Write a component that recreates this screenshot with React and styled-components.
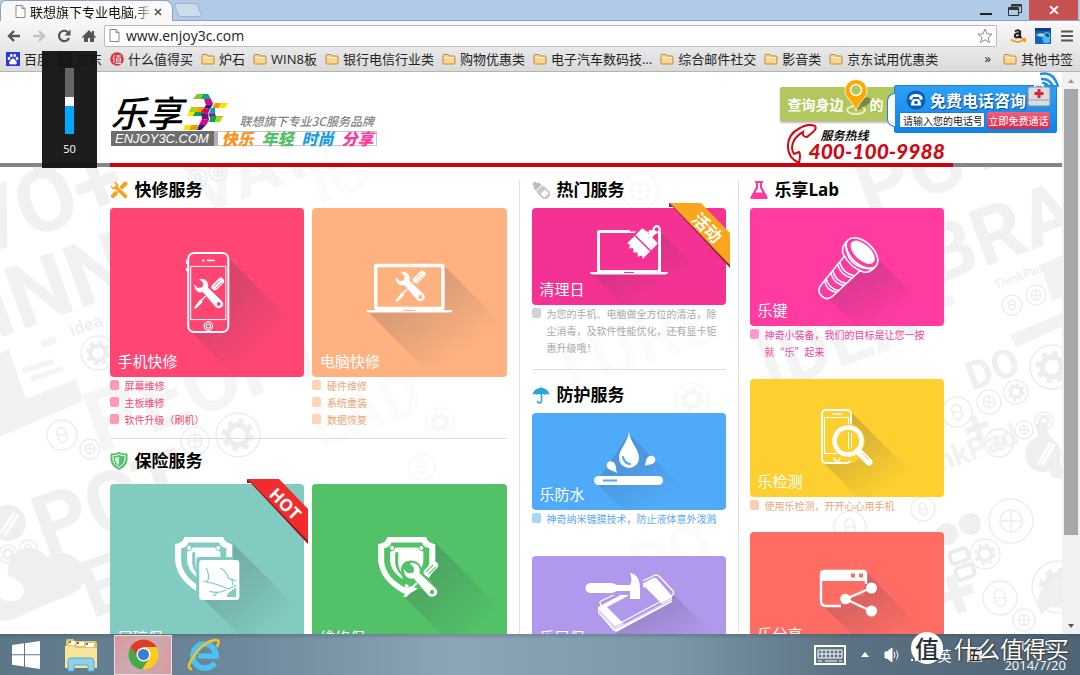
import React from "react";
import styled, { createGlobalStyle } from "styled-components";

const sans = `"Open Sans", "Noto Sans CJK SC", sans-serif`;
const cjk = `"Noto Sans CJK SC", sans-serif`;

const GlobalStyle = createGlobalStyle`
  * { box-sizing: border-box; }
  html, body { margin: 0; height: 100%; }
  body { font-family: ${sans}; background: #fff; color: #000; overflow: hidden; }
  button { font: inherit; padding: 0; border: 0; background: none; color: inherit; cursor: pointer; }
  a { color: inherit; text-decoration: none; }
  h1, h2, p, ul { margin: 0; padding: 0; }
  ul { list-style: none; }
  svg { display: block; flex: none; }
`;

const Desktop = styled.div`
  position: relative;
  height: 100vh;
  display: flex;
  flex-direction: column;
`;

/* ---------- browser chrome ---------- */

const TitleBar = styled.header`
  flex: none;
  height: 21px;
  display: flex;
  align-items: flex-end;
  background: #b0cae8;
  border-bottom: 1px solid #8ba4c2;
`;

const TabShape = styled.div`
  height: 21px;
  margin-bottom: -1px;
  padding: 1px 10px 0 14px;
  display: flex;
  align-items: center;
  gap: 4px;
  background: #f8f8f8;
  border: 1px solid #8ba4c2;
  border-bottom: 0;
  border-radius: 6px 8px 0 0;
  font-size: 13px;
  line-height: 20px;
  white-space: nowrap;
`;

const FadingText = styled.span`
  background: linear-gradient(90deg, #111 84%, #bbb 100%);
  background-clip: text;
  color: transparent;
`;

const NewTab = styled.button`
  width: 24px;
  height: 14px;
  margin: 0 0 3px 3px;
  && {
    background: #cddcec;
    border: 1px solid #9ab2cf;
  }
  border-radius: 3px;
  transform: skewX(20deg);
`;

const WindowButtons = styled.div`
  margin-left: auto;
  padding-right: 2px;
  align-self: flex-start;
  display: flex;
`;

const WindowButton = styled.button`
  width: ${(p) => (p.$close ? 49 : 29)}px;
  height: 20px;
  display: grid;
  place-items: center;
  && { background: ${(p) => (p.$close ? "#c75050" : "transparent")}; }
`;

const Toolbar = styled.div`
  flex: none;
  height: 28px;
  padding: 1px 6px 0 7px;
  display: flex;
  align-items: center;
  gap: 11px;
  background: linear-gradient(#f8f8f8, #e8e8e8);
`;

const ToolButton = styled.button`
  width: 14px;
  height: 16px;
  display: grid;
  place-items: center;
`;

const AddressBox = styled.label`
  flex: 1;
  height: 22px;
  margin: 0 2px 0 -3px;
  padding: 0 3px 0 4px;
  display: flex;
  align-items: center;
  gap: 6px;
  background: #fff;
  border: 1px solid #bcbcbc;
  border-radius: 2px;
`;

const AddressInput = styled.input`
  flex: 1;
  min-width: 0;
  border: 0;
  outline: 0;
  padding: 0;
  background: none;
  color: #222;
  font: 14px/20px ${sans};
`;

const Bookmarks = styled.nav`
  flex: none;
  height: 23px;
  padding: 0 7px 2px 6px;
  display: flex;
  align-items: center;
  gap: 8px;
  background: linear-gradient(#e8e8e8, #dadada);
  border-bottom: 1px solid #b4b4b4;
  font-size: 13px;
  line-height: 20px;
  color: #222;
  white-space: nowrap;
`;

const Bookmark = styled.a`
  display: flex;
  align-items: center;
  gap: 4px;
`;

const Overflow = styled.button`
  margin-left: auto;
  && { padding: 0 4px 2px 0; }
`;

const Viewport = styled.div`
  flex: 1;
  min-height: 0;
  display: flex;
`;

const Page = styled.div`
  flex: 1;
  min-width: 0;
  display: flex;
  flex-direction: column;
`;

const ScrollTrack = styled.div`
  flex: none;
  width: 18px;
  padding: 0 2px;
  display: flex;
  flex-direction: column;
  align-items: center;
  background: #f1f1f1;
`;

const ScrollArrow = styled.button`
  flex: none;
  height: 17px;
  display: grid;
  place-items: center;
`;

const ScrollThumb = styled.div`
  width: 14px;
  flex: 0 1 446px;
  margin-bottom: auto;
  background: #a8a8a8;
`;

/* ---------- site ---------- */

const Inner = styled.div`
  width: 100%;
  max-width: 843px;
  margin: 0 auto;
`;

const SiteHeader = styled.header`
  position: relative;
  flex: none;
  height: 91px;
  background: #fff;
`;

const HeaderRow = styled(Inner)`
  height: 100%;
  display: flex;
  justify-content: space-between;
`;

const Brand = styled.div`
  padding: 20px 0 0 1px;
`;

const BrandTop = styled.div`
  height: 39px;
  display: flex;
  align-items: flex-end;
`;

const BrandName = styled.h1`
  font: italic 500 36px/40px ${cjk};
`;

const BrandTagline = styled.p`
  margin-left: 12px;
  font: italic 500 12px/20px ${cjk};
  color: #858585;
`;

const BrandBottom = styled.div`
  height: 15px;
  display: flex;
`;

const Domain = styled.span`
  width: 103px;
  background: #6e6e6e;
  color: #fff;
  text-align: center;
  font: italic 400 13px/15px "Liberation Sans", sans-serif;
`;

const Slogans = styled.ul`
  padding: 0 2px 0 4px;
  display: flex;
  gap: 8px;
  border: 1px solid #c4c4c4;
  border-left: 4px solid #b0b0b0;
`;

const Slogan = styled.li`
  color: ${(p) => p.$color};
  font: italic 900 16px/13px ${cjk};
`;

const Contact = styled.div`
  width: 173px;
  padding-top: 15px;
`;

const StoreFinder = styled.a`
  height: 34px;
  width: 130px;
  padding-left: 8px;
  display: flex;
  align-items: center;
  background: #b2c75d;
  border-radius: 2px;
  box-shadow: 0 2px 2px #bbb;
  color: #fff;
  font: 700 14px/34px ${cjk};
  white-space: nowrap;
`;

const Pin = styled.svg`
  margin: -14px -3px 0 -3px;
`;

const Hotline = styled.div`
  padding: 3px 0 0 6px;
  display: flex;
  align-items: flex-start;
`;

const HotlineText = styled.p`
  padding-top: 5px;
  margin-left: -8px;
  color: #cf0a14;
  font: italic 900 21px/20px Lato, sans-serif;
  white-space: nowrap;
`;

const HotlineLabel = styled.span`
  display: block;
  padding-left: 12px;
  color: #111;
  font: italic 700 12px/12px ${cjk};
`;

const CallPanel = styled.form`
  position: absolute;
  right: 5px;
  top: 13px;
  width: 163px;
  height: 48px;
  padding: 3px 6px 4px 4px;
  background: linear-gradient(#2fa0f5, #0c84ea);
  border: 1px solid #1b7fd6;
  border-radius: 2px;
`;

const CallTab = styled.span`
  position: absolute;
  left: -8px;
  top: 7px;
  width: 8px;
  height: 34px;
  background: #fff;
  border: 1px solid #1b86e0;
  border-right: 0;
  border-radius: 8px 0 0 8px;
`;

const CallTitle = styled.div`
  height: 21px;
  padding-left: 7px;
  display: flex;
  align-items: center;
  gap: 4px;
  color: #fff;
  font: 700 16px/20px ${cjk};
  text-shadow: 1px 1px 1px #124c96;
  white-space: nowrap;
`;

const CallArt = styled.svg`
  position: absolute;
  right: -4px;
  top: -15px;
`;

const CallRow = styled.div`
  padding-top: 2px;
  display: flex;
  justify-content: space-between;
`;

const PhoneInput = styled.input`
  width: 86px;
  height: 16px;
  padding: 0 3px;
  border: 1px solid #1b7fd6;
  border-radius: 2px;
  background: #fff;
  color: #222;
  font: 10px/14px ${cjk};
`;

const CallButton = styled.button`
  && {
    width: 63px;
    height: 17px;
    border-radius: 3px;
    background: linear-gradient(#f2607c, #dd2747);
    color: #fff;
    font: 10px/16px ${cjk};
  }
`;

const Rule = styled.div`
  flex: none;
  background: #858585;
`;

const RuleAccent = styled(Inner)`
  height: 4px;
  background: #d1000f;
`;

const Main = styled.main`
  position: relative;
  flex: 1;
  min-height: 0;
  overflow: hidden;
`;

const Backdrop = styled.svg`
  position: absolute;
  inset: 0;
  width: 100%;
  height: 100%;
`;

const Columns = styled(Inner)`
  position: relative;
  padding-top: 13px;
  display: grid;
  grid-template-columns: 410fr 219fr 214fr;
`;

const Column = styled.section`
  padding: 0 ${(p) => p.$right}px 0 ${(p) => p.$left}px;
  border-right: ${(p) => (p.$line ? "1px solid #e2e2e2" : "0")};
`;

const Heading = styled.h2`
  height: 20px;
  margin-bottom: ${(p) => (p.$roomy ? 13 : 8)}px;
  display: flex;
  align-items: center;
  gap: 7px;
  font: 700 17px/20px ${sans};
`;

const Pair = styled.div`
  display: grid;
  grid-template-columns: 1fr 1fr;
  gap: 8px;
`;

const Divider = styled.hr`
  height: 1px;
  margin: ${(p) => p.$top}px 0 ${(p) => p.$bottom}px;
  border: 0;
  background: #dedede;
`;

const Service = styled.article`
  margin-bottom: ${(p) => p.$after || 0}px;
`;

const Card = styled.a`
  position: relative;
  height: ${(p) => p.$height}px;
  display: grid;
  grid-template-areas: "stack";
  border-radius: 4px;
  background: ${(p) => p.$color};
  color: #fff;
`;

const CardArt = styled.svg`
  grid-area: stack;
  width: 100%;
  height: 100%;
`;

const CardLabel = styled.span`
  grid-area: stack;
  align-self: end;
  padding: 0 0 6px 8px;
  font: 15px/20px ${cjk};
`;

const Ribbon = styled.svg`
  position: absolute;
  top: -5px;
  right: -4px;
`;

const Notes = styled.ul`
  color: ${(p) => p.$color};
  font: 10px/17px ${cjk};
`;

const Note = styled.li`
  display: flex;
  gap: 6px;
  &::before {
    content: "";
    flex: none;
    width: 9px;
    height: 10px;
    margin-top: 3px;
    border-radius: 2px;
    background: ${(p) => p.$bullet};
  }
`;

/* ---------- desktop ---------- */

const Taskbar = styled.footer`
  flex: none;
  height: 41px;
  padding: 0 14px 0 4px;
  display: flex;
  align-items: center;
  background: linear-gradient(180deg, rgba(40, 60, 75, 0.25), transparent 12%),
    linear-gradient(90deg, #5d7789 0%, #6d889a 22%, #8ba6b6 42%, #7c98a8 62%, #5b7282 78%, #4f6474 100%);
`;

const TaskButton = styled.button`
  width: ${(p) => p.$width}px;
  height: 40px;
  margin-right: ${(p) => p.$gap || 0}px;
  display: grid;
  place-items: center;
  ${(p) => p.$active && "&& { border: 1px solid #f0d8dc; background: linear-gradient(120deg, #d9979c, #c9adb3 45%, #d99ba0); }"}
`;

const Tray = styled.div`
  margin-left: auto;
  display: flex;
  align-items: center;
  gap: 10px;
  color: #fff;
  font-size: 14px;
`;

const Ime = styled.span`
  padding: 0 1px;
  margin: 0 12px 0 6px;
  background: #f2f2f2;
  color: #222;
  font: 500 13px/15px ${cjk};
`;

const Clock = styled.time`
  text-align: center;
  font: 13px/20px ${sans};
`;

const Watermark = styled.div`
  position: absolute;
  right: 11px;
  bottom: 11px;
  display: flex;
  align-items: center;
  gap: 11px;
  color: #fff;
  font: 400 23px/32px ${cjk};
  text-shadow: 0 0 2px #222, 1px 1px 1px #444;
`;

const Seal = styled.span`
  width: 32px;
  height: 32px;
  border-radius: 50%;
  background: #fff;
  color: #26323a;
  text-align: center;
  font: 500 24px/31px ${cjk};
  text-shadow: none;
`;

const Volume = styled.aside`
  position: absolute;
  left: 42px;
  top: 51px;
  width: 55px;
  height: 117px;
  padding: 17px 0 9px;
  display: flex;
  flex-direction: column;
  align-items: center;
  justify-content: space-between;
  background: rgba(20, 20, 20, 0.96);
  color: #fff;
  font-size: 11px;
  line-height: 20px;
`;

const VolumeBar = styled.div`
  width: 9px;
  height: 66px;
  border-bottom: 28px solid #00a8ff;
  background: linear-gradient(#666 29px, #fff 29px);
`;

/* ---------- small icons ---------- */

const PageIcon = () => (
  <svg width="11" height="13" viewBox="0 0 11 13" fill="#fff" stroke="#888">
    <path d="M1 .5h6l3 3v9H1zM7 .5v3h3" />
  </svg>
);

const FolderIcon = () => (
  <svg width="14" height="12" viewBox="0 0 14 12">
    <path d="M1 2.500q0-1 1-1h4l1 1.500h5q1 0 1 1V10q0 1-1 1H2q-1 0-1-1z" fill="#fbd68e" stroke="#b98847" />
    <path d="M2 4.500h10" stroke="#fff0c8" />
  </svg>
);

const PawIcon = () => (
  <svg width="14" height="14" viewBox="0 0 14 14">
    <rect width="14" height="14" fill="#2a37e0" />
    <g fill="#fff">
      <ellipse cx="3" cy="6.500" rx="1.300" ry="1.700" />
      <ellipse cx="5.300" cy="3.500" rx="1.300" ry="1.800" />
      <ellipse cx="8.700" cy="3.500" rx="1.300" ry="1.800" />
      <ellipse cx="11" cy="6.500" rx="1.300" ry="1.700" />
      <path d="M7 6.500c2 0 2 2 3.500 3.200 1 1.500-.2 3-1.700 2.800-1.200-.2-2.400-.2-3.600 0-1.500.2-2.700-1.300-1.700-2.800C5 8.500 5 6.500 7 6.500z" />
    </g>
  </svg>
);

const SealIcon = () => (
  <svg width="14" height="14" viewBox="0 0 14 14">
    <circle cx="7" cy="7" r="6.800" fill="#d63a3f" />
    <path d="M4.500 3 3 7M4 6v5M6 4h5M8.500 3v2M6.500 6h4v4h-4zM6.500 8h4M5.500 11.500h6" stroke="#fff" strokeWidth=".8" fill="none" />
  </svg>
);

const JdIcon = () => (
  <svg width="14" height="14" viewBox="0 0 14 14">
    <rect width="14" height="14" rx="1" fill="#c22" />
    <path d="M5 3v6q0 2-2 2M8 3v8q4 0 4-4t-4-4" stroke="#fff" fill="none" />
  </svg>
);

const Tools = ({ bg }) => (
  <g>
    <path d="M21 9 27 3" stroke="#fff" strokeWidth="6.500" strokeLinecap="round" />
    <path d="M20 8.500 26 2.500M22 10.500 28 4.500" stroke={bg} strokeWidth=".9" />
    <path d="M12 18 6 24" stroke="#fff" strokeWidth="1.600" />
    <path d="M6.500 21.500 9 24 2.500 30.500 0 30z" fill="#fff" />
    <path
      d="M5 1C11-1 16 4 14.500 9.500L28.500 23C32.500 28 26 33 21.500 29L9 14.500C4 16 0 12 0 5.500L4 9.500 8.500 9 9 5z"
      fill="#fff"
      stroke={bg}
      strokeWidth=".8"
    />
    <circle cx="25" cy="26" r="1.900" fill={bg} />
  </g>
);

const Shield = ({ bg }) => {
  const d = "M9 0H48Q49 6 57 7V24Q55 45 28.500 58Q2 45 0 24V7Q8 6 9 0Z";
  return (
    <g>
      <path d={d} fill="#fff" />
      <path d={d} fill={bg} transform="translate(6 5.500) scale(.79)" />
      <path d={d} fill="#fff" transform="translate(12 10.500) scale(.58)" />
      <path d="M17 15.500V27q1 8 11 15-8-8-8-16V15z" fill={bg} />
      <circle cx="14" cy="11" r="2" fill="#fff" />
      <circle cx="43" cy="11" r="2" fill="#fff" />
      <circle cx="28.500" cy="49" r="2" fill="#fff" />
    </g>
  );
};

/* ---------- card drawings ---------- */

const Art = ({ id, height, shadow, children }) => (
  <CardArt viewBox={`0 0 194 ${height}`} preserveAspectRatio="xMidYMid slice" aria-hidden="true" fill="none">
    <defs>
      <linearGradient id={id} x1=".15" y1=".15" x2=".72" y2=".77">
        <stop offset="0" stopColor="#3c3c50" stopOpacity=".22" />
        <stop offset=".35" stopColor="#3c3c50" stopOpacity=".17" />
        <stop offset="1" stopColor="#3c3c50" stopOpacity="0" />
      </linearGradient>
    </defs>
    <path d={shadow} fill={`url(#${id})`} />
    {children}
  </CardArt>
);

const PhoneArt = ({ bg }) => (
  <Art id="sh-phone" height={169} shadow="M118 50 194 126V169H126L80 123z">
    <rect x="78" y="45" width="40" height="79" rx="6" fill={bg} stroke="#fff" strokeWidth="2" />
    <path d="M76.500 52v4M76.500 60v3" stroke="#fff" strokeWidth="1.500" />
    <rect x="80.500" y="58.500" width="35" height="53" stroke="#fff" />
    <circle cx="93" cy="52.500" r="1.200" fill="#fff" />
    <path d="M96.500 52.500h8" stroke="#fff" strokeWidth="1.600" />
    <circle cx="98" cy="118" r="4.200" stroke="#fff" strokeWidth="1.200" />
    <circle cx="98" cy="118" r="2.200" stroke="#fff" />
    <g transform="translate(83.500 70)"><Tools bg={bg} /></g>
  </Art>
);

const LaptopArt = ({ bg }) => (
  <Art id="sh-laptop" height={169} shadow="M131 57 194 120V169H121L56 104z">
    <rect x="63.500" y="57.500" width="67" height="43" rx="1" fill={bg} stroke="#fff" strokeWidth="3.500" />
    <circle cx="97" cy="57.500" r=".8" fill={bg} />
    <path d="M54 102H140Q140 104.500 136 104.500H58Q54 104.500 54 102z" fill="#fff" />
    <path d="M91 102h12v1H91z" fill={bg} />
    <g transform="translate(83 63)"><Tools bg={bg} /></g>
  </Art>
);

const BrushArt = ({ bg }) => (
  <Art id="sh-brush" height={97} shadow="M128 24 165 61V97H91L60 66z">
    <rect x="66.500" y="23.500" width="61" height="40" rx="1" fill={bg} stroke="#fff" strokeWidth="3" />
    <path d="M58 64H136Q136 66.500 132 66.500H62Q58 66.500 58 64z" fill="#fff" />
    <path d="M92 64h10v1H92z" fill={bg} />
    <path d="M98 22.500H117" stroke={bg} strokeWidth="2" />
    <g transform="translate(112 34) rotate(45)">
      <path d="M-13-8H13V5H-13z" fill={bg} />
      <path d="M0-18V-6" stroke="#fff" strokeWidth="5" />
      <circle cx="0" cy="-18" r="3" stroke="#fff" strokeWidth="2" fill={bg} />
      <path d="M-11-7q0-2 2-2H9q2 0 2 2V1H-11z" fill="#fff" />
      <path d="M-11 2.500H11V13L8 11 6 15 3 12 0 15-3 12-6 15-8 12-11 13z" fill="#fff" />
    </g>
  </Art>
);

const WaterArt = ({ bg }) => (
  <Art id="sh-water" height={97} shadow="M97 21 173 97H91L64 70z">
    <path d="M97 19C98 29 107 36 107 45A10 10 0 0 1 87 45C87 36 96 29 97 19z" fill="#fff" />
    <path d="M91 44q1 6 7 7" stroke={bg} strokeWidth="2.200" strokeLinecap="round" />
    <path d="M85 60C80 57 75 57 74.500 52.500C75 47 81 47 83 51C84.500 54 83.500 56 85 60z" fill="#fff" />
    <path d="M113 53C114 48 114 44 118 43C122 42 125 46 122.500 49.500C120 52 116 51 113 53z" fill="#fff" />
    <rect x="62" y="63" width="69" height="9" rx="4.500" fill="#fff" />
    <path d="M71 67.500h14" stroke={bg} strokeWidth="2" />
  </Art>
);

const HammerArt = ({ bg }) => (
  <Art id="sh-hammer" height={97} shadow="M141 38 194 91V97H104L84 77z">
    <path d="M66 51 121 22Q124 21 126 24L140 40V46L88 74Q84 77 81 74L66 57z" fill="#fff" />
    <path d="M75 51 113 31 130 48 92 68z" fill={bg} />
    <path d="M67 54 83 71 140 42M67 56 83 73 140 44" stroke={bg} strokeWidth=".7" />
    <path d="M69 45 121 20Q125 18 128 21L141 35Q143 38 139 40L92 65Q88 67 85 64L69 49Q67 46 69 45z" stroke="#fff" strokeWidth="1.300" />
    <path d="M96 24H111V46H96zM80 27H98V39H80z" fill={bg} />
    <path d="M58 27H78Q82 27 85 29H98Q101 24 98 17Q107 18 108 31V43H98V35H85Q82 37 78 37H58Q53.500 36 53.500 32Q53.500 28 58 27z" fill="#fff" />
  </Art>
);

const KeyArt = ({ bg }) => (
  <Art id="sh-key" height={118} shadow="M126 50 178 100V118H106L76 88z">
    <g transform="translate(112 45) rotate(43)" stroke="#fff" strokeWidth="1.600" fill={bg}>
      <path d="M-11 10-8 52Q-7 59 0 59Q7 59 8 52L11 10z" />
      <path d="M-8 46Q0 52 8 46M-9 43Q0 49 9 43M-9 36Q0 42 9 36M-9 33Q0 39 9 33M-10 25Q0 31 10 25M-10 22Q0 28 10 22" fill="none" />
      <path d="M-19 0Q-20 9-14 13Q0 19 14 13Q20 9 19 0z" />
      <ellipse cx="0" cy="0" rx="19" ry="11" />
      <path d="M-19 4Q0 22 19 4" fill="none" />
      <ellipse cx="0" cy="-1" rx="14" ry="7" fill="#fff" />
    </g>
  </Art>
);

const InspectArt = ({ bg }) => (
  <Art id="sh-inspect" height={118} shadow="M101 33 180 112V118H108L74 84z">
    <rect x="72" y="31" width="29" height="53" rx="4" fill={bg} stroke="#fff" strokeWidth="2" />
    <path d="M82 35h2M85 35h7" stroke="#fff" strokeWidth="1.600" />
    <rect x="74.500" y="38.500" width="24" height="36" stroke="#fff" />
    <path d="M84 78q0 4 3 4t3-4" stroke="#fff" strokeWidth="1.300" />
    <path d="M98 72 106 82" stroke={bg} strokeWidth="9" />
    <circle cx="98" cy="62" r="17" fill={bg} />
    <circle cx="98" cy="62" r="13.500" stroke="#fff" strokeWidth="4.500" />
    <path d="M98.500 53v17M101.500 54v15" stroke="#fff" />
    <path d="M108 72 119 83" stroke="#fff" strokeWidth="7" strokeLinecap="round" />
    <path d="M112 74 119 81" stroke={bg} />
  </Art>
);

const ShareArt = ({ bg }) => (
  <Art id="sh-share" height={118} shadow="M117 41 190 114V118H118L72 73z">
    <path d="M91 74H76Q71 74 71 69V43Q71 39 75 39H113Q116 39 116 43V52" fill={bg} stroke="#fff" strokeWidth="2.400" />
    <path d="M91 73 114.500 52V63L95 67z" fill={bg} />
    <path d="M70 49V42Q70 38 74 38H113Q117 38 117 42V49z" fill="#fff" />
    <path d="M101 41.500h4v4h-4zM109 41.500h4v4h-4z" fill={bg} />
    <path d="M121 56 95.500 67 121 79" stroke="#fff" strokeWidth="2.200" />
    <circle cx="95.500" cy="67" r="5.300" fill="#fff" />
    <circle cx="121.500" cy="56" r="5.500" fill="#fff" />
    <circle cx="121.500" cy="79" r="5.500" fill="#fff" />
  </Art>
);

const ScreenCoverArt = ({ bg }) => (
  <Art id="sh-cover" height={169} shadow="M121 58 194 131V169H148L90 112z">
    <g transform="translate(65 53)"><Shield bg={bg} /></g>
    <rect x="86" y="73" width="38" height="40" rx="3" fill={bg} />
    <rect x="89" y="76" width="40" height="40" rx="3" fill="#fff" />
    <path d="M96 84Q100 92 97 98L93 97M97 98Q110 101 118 105L126 101M110 84Q117 88 118 94L126 97M118 94Q124 96 122 101M99 107Q108 110 116 106M103 112 108 108" stroke={bg} strokeWidth="1.200" />
    <path d="M118 109 126 103V113H116z" fill={bg} />
  </Art>
);

const RepairCoverArt = ({ bg }) => (
  <Art id="sh-repair" height={169} shadow="M122 58 194 130V169H148L92 113z">
    <g transform="translate(66 53)"><Shield bg={bg} /></g>
    <path d="M90 88Q90 78 99 78Q107 78 109 88L118 98 108 104 93 98z" fill={bg} stroke={bg} strokeWidth="3" />
    <g transform="translate(91 78) scale(1.150)"><Tools bg={bg} /></g>
  </Art>
);

const RibbonArt = ({ color, fold, text }) => (
  <Ribbon width="61" height="65" viewBox="0 0 61 65" aria-hidden="true">
    <path d="M0 0V4H4zM57 60 61 64V60z" fill={fold} />
    <path d="M0 0 61 65V57L8 0z" fill={fold} />
    <path d="M1 0H32L61 30V62z" fill={color} />
    <text x="38" y="31" transform="rotate(45 38 25)" textAnchor="middle" fill="#fff" fontFamily={sans} fontWeight="700" fontSize="17">
      {text}
    </text>
  </Ribbon>
);

/* ---------- section icons ---------- */

const SectionIcon = ({ children }) => (
  <svg width="18" height="18" viewBox="0 0 18 18" aria-hidden="true">{children}</svg>
);

const RepairIcon = () => (
  <SectionIcon>
    <path d="M12 6 15.500 2.500M6 12 3 15" stroke="#f7a021" strokeWidth="4" strokeLinecap="round" />
    <path d="M3 .5C7 0 9 3 8 5.500L17 14C18.500 17 16 18.500 14 17L5.500 8.500C3 9.500 0 7 .5 3.500L3 6 5 5.500 5.500 3.500z" fill="#f7a021" stroke="#fff" strokeWidth=".6" />
  </SectionIcon>
);

const BottleIcon = () => (
  <SectionIcon>
    <g transform="translate(8 8) rotate(-45)">
      <path d="M-2-9H2V-7L4-5V-2H-4V-5L-2-7z" fill="#bdbdbd" />
      <path d="M-4-1H4L5 1V10Q5 12 3 12H-3Q-5 12-5 10V1z" fill="#c9c9c9" />
      <path d="M-3 4H3V9H-3z" fill="#fff" />
    </g>
  </SectionIcon>
);

const UmbrellaIcon = () => (
  <SectionIcon>
    <path d="M.5 9.500C1 4 5 2 8.500 2V.5h1V2C13 2 17 4 17.500 9.500Q15.500 7 13 9Q11 7 9 9Q7 7 5 9Q2.500 7 .5 9.500z" fill="#27a5dd" />
    <path d="M9.500 8v7q0 2-2 2t-2-2" stroke="#27a5dd" strokeWidth="1.500" fill="none" />
  </SectionIcon>
);

const FlaskIcon = () => (
  <SectionIcon>
    <path d="M5 0h8v2h-1v4l5.500 10q.5 2-1 2H1.500q-1.500 0-1-2L6 6V2H5z" fill="#ff3aa0" />
    <path d="M8 2h2v5l2.500 4.500h-7L8 7z" fill="#fff" />
  </SectionIcon>
);

const ShieldIcon = () => (
  <SectionIcon>
    <path d="M9 0Q13 2 17.500 1.500V8Q17 14 9 18Q1 14 .5 8V1.500Q5 2 9 0z" fill="#52c167" />
    <path d="M9 2.500Q12 4 15 3.500V8Q14.500 12 9 15.500Q3.500 12 3 8V3.500Q6 4 9 2.500z" fill="none" stroke="#fff" />
    <path d="M9 4.500Q7 5.500 5 5.500V8Q5.500 11 9 13.500z" fill="#fff" opacity=".75" />
  </SectionIcon>
);

/* ---------- backdrop ---------- */

const words = [
  ["VO+", -26, 92, 88, 4], ["INN", -4, 172, 88, 4], ["VAT", 200, 48, 70, 9], ["IC", 318, 38, 64, 15],
  ["idea", 72, 170, 18, 2], ["PEOPLE", 98, 286, 84, 8], ["PCT", 46, 390, 84, 3],
  ["E", 92, 452, 80, 2], ["EAD", 320, 282, 60, 16], ["TURE", 560, 230, 70, 15], ["PC+", 868, 52, 84, 5],
  ["BRA", 935, 118, 80, 4], ["IDEA+", 770, 226, 76, 7], ["ThinkPad", 996, 122, 12, 2], ["DO", 972, 224, 40, 2],
  ["ThinkPad", 900, 320, 30, 5], ["+", 970, 280, 48, 3], ["DO", 640, 420, 60, 15], ["+", 945, 458, 76, 4],
];

const rings = [
  [98, 186, 17], [62, 268, 15], [90, 282, 10], [8, 387, 9], [28, 382, 9], [195, 274, 14], [238, 268, 22], [198, 11, 9], [218, 5, 9],
  [440, 255, 14], [422, 300, 13], [640, 24, 18], [692, 232, 16], [1012, 138, 10], [1036, 128, 10],
  [1052, 200, 22], [957, 245, 15], [989, 235, 12], [1016, 225, 12], [999, 276, 14], [1024, 263, 9], [1044, 254, 9],
  [923, 342, 12], [1011, 354, 22], [985, 387, 15], [1000, 431, 17], [1024, 453, 11], [1058, 420, 26], [850, 360, 16],
];

const BackdropArt = () => (
  <Backdrop viewBox="0 0 1062 467" preserveAspectRatio="xMidYMin slice" aria-hidden="true">
    <g fontFamily="Roboto, sans-serif" fontWeight="700">
      {words.map(([text, x, y, size, fade], i) => (
        <text key={i} x={x} y={y} fontSize={size} fill="#e9e9e9" opacity={Math.max(0.14, 0.8 - fade * 0.045)} transform={`rotate(-20 ${x} ${y})`}>
          {text}
        </text>
      ))}
    </g>
    {rings.map(([x, y, r], i) => (
      <g key={i} fill="none" stroke="#ececec" strokeWidth="1.500" opacity={x > 300 && x < 760 ? 0.4 : 0.9}>
        <circle cx={x} cy={y} r={r} />
        {i % 3 === 0 && <circle cx={x} cy={y} r={r * 0.45} strokeWidth={r * 0.25} />}
        {i % 3 === 0 && <circle cx={x} cy={y} r={r * 0.65} strokeWidth={r * 0.18} strokeDasharray={`${r * 0.25} ${r * 0.26}`} />}
        {i % 3 === 1 && <rect x={x - r * 0.3} y={y - r * 0.5} width={r * 0.6} height={r} rx={r * 0.3} transform={`rotate(-15 ${x} ${y})`} />}
        {i % 3 === 1 && <path d={`M${x - r * 0.3} ${y}h${r * 0.6}`} />}
        {i % 3 === 2 && <path d={`M${x - r * 0.5} ${y}h${r}M${x} ${y - r * 0.5}v${r}`} />}
        {i % 3 === 2 && <circle cx={x} cy={y} r={r * 0.5} />}
      </g>
    ))}
    <g fill="#efefef">
      <path d="M0 186 9 182 26 232 76 212 83 234 0 270z" opacity=".8" />
      <path d="M32 0H66L36 10z" opacity=".8" />
      <path d="M22 201 52 192 55 197 24 206zM30 210 62 199 64 204 32 215zM40 174 55 169 57 176 42 181z" opacity=".7" />
      <path d="M1041 98 1062 88V130L1052 134zM1010 168 1062 146V160L1016 180z" opacity=".8" />
      <path d="M1035 258 1044 254 1062 300V312L1052 310z" />
      <path d="M8 407C5 385 30 370 47 390C65 378 88 395 86 410C82 430 60 428 15 452L-5 455V425C5 440 25 435 24 422C20 410 5 410 8 407z" />
      <circle cx="8" cy="356" r="18" />
      <circle cx="1043" cy="287" r="18" />
      <circle cx="947" cy="367" r="11" />
      <circle cx="970" cy="357" r="11" />
      <path d="M1045 418q10-8 17-8v32q-14-6-20 6-10-14 3-30z" />
    </g>
    <path d="M1 366 14 346M5 368 18 348M1038 298 1050 276M1042 299 1054 277" stroke="#fff" strokeWidth="3" />
    <g fill="none" stroke="#ececec" strokeWidth="4">
      <rect x="950" y="383" width="18" height="12" rx="3" transform="rotate(-20 959 389)" />
      <rect x="956" y="399" width="18" height="12" rx="3" transform="rotate(-20 965 405)" />
    </g>
  </Backdrop>
);

const Mosaic = () => (
  <svg width="45" height="37" viewBox="-4 0 45 37" aria-hidden="true">
    <path d="M10 0H16L14 5H6z" fill="#8fc31f" />
    <path d="M16 0H21L24 5H14z" fill="#00a886" />
    <path d="M17 5H24L26 10 19 11z" fill="#e4007f" />
    <path d="M19 11 26 10 23 15 17 14z" fill="#1d2088" />
    <path d="M4 13H11L9 18H2z" fill="#b5d100" />
    <path d="M11 13H17L15 18H9z" fill="#f39800" />
    <path d="M17 14 23 15 21 20 14 18z" fill="#e60044" />
    <path d="M2 18H8L6 22H0z" fill="#ffe100" />
    <path d="M8 18H14L16 22H6z" fill="#00a650" />
    <path d="M14 18 21 20 22 26 15 25z" fill="#601986" />
    <path d="M15 25 22 26 19 31 12 31z" fill="#e4007f" />
    <path d="M12 31H19L14 36H10z" fill="#1d2088" />
    <path d="M4 31H12L10 36H2z" fill="#f39800" />
    <path d="M-2 31H4L2 36H-4z" fill="#ffe100" />
    <path d="M28 9H34L32 14H25z" fill="#f39800" />
    <path d="M34 9H41L38 14H32z" fill="#ffe100" />
    <path d="M24 14 28 14 28 19 22 20z" fill="#00a0c6" />
    <path d="M21 20 28 19 29 23 24 25z" fill="#8a1b8e" />
    <path d="M24 22H30L28 28H22z" fill="#00a650" />
    <path d="M30 22H36L33 28H28z" fill="#b5d100" />
  </svg>
);

const PinIcon = () => (
  <Pin width="32" height="36" viewBox="-3 0 32 36" aria-hidden="true">
    <ellipse cx="12" cy="31" rx="9" ry="4" fill="none" stroke="#e8f0c4" strokeWidth="2" />
    <path d="M12 31Q16 18 24 18Q30 21 23 26T12 31z" fill="#66702f" opacity=".7" />
    <path d="M12 32C9 22 1 19 1 11.500A11 11 0 0 1 23 11.500C23 19 15 22 12 32z" fill="#ffa800" stroke="#fff" strokeWidth=".8" />
    <circle cx="12" cy="11" r="5.500" fill="#b2c75d" stroke="#fff" strokeWidth="1.500" />
  </Pin>
);

const bookmarks = [
  ["百度", <PawIcon />], ["京东", <JdIcon />], ["什么值得买", <SealIcon />], ["炉石"], ["WIN8板"],
  ["银行电信行业类"], ["购物优惠类"], ["电子汽车数码技..."], ["综合邮件社交"], ["影音类"], ["京东试用优惠类"],
];

function ServiceCard({ name, color, height, art: Drawing, notes, noteColor, bullet, ribbon, after }) {
  return (
    <Service $after={after}>
      <Card href="#" $height={height} $color={color}>
        <Drawing bg={color} />
        <CardLabel>{name}</CardLabel>
        {ribbon}
      </Card>
      {notes && (
        <Notes $color={noteColor}>
          {notes.map((note) => <Note key={note} $bullet={bullet}><span>{note}</span></Note>)}
        </Notes>
      )}
    </Service>
  );
}

export default function App() {
  return (
    <Desktop>
      <GlobalStyle />
      <TitleBar>
        <TabShape>
          <PageIcon />
          <FadingText>联想旗下专业电脑,手</FadingText>
          <button aria-label="关闭标签页">
            <svg width="8" height="8" viewBox="0 0 8 8" stroke="#555" strokeWidth="1.600"><path d="m1 1 6 6M7 1 1 7" /></svg>
          </button>
        </TabShape>
        <NewTab aria-label="新标签页" />
        <WindowButtons>
          <WindowButton aria-label="最小化">
            <svg width="12" height="14" viewBox="0 0 12 14"><path d="M0 11h12" stroke="#222" strokeWidth="2" /></svg>
          </WindowButton>
          <WindowButton aria-label="还原">
            <svg width="14" height="13" viewBox="0 0 14 13" fill="none" stroke="#333"><path d="M.5 3.500h10v8H.5zM3.500 3V.5h10v8H11" /><path d="M1 5h9M4 1.500h9" strokeWidth="2" /></svg>
          </WindowButton>
          <WindowButton $close aria-label="关闭">
            <svg width="10" height="8" viewBox="0 0 10 8" stroke="#fff" strokeWidth="1.900"><path d="m1 0 8 8M9 0 1 8" /></svg>
          </WindowButton>
        </WindowButtons>
      </TitleBar>

      <Toolbar>
        <ToolButton aria-label="后退">
          <svg width="14" height="12" viewBox="0 0 14 12" fill="none" stroke="#555" strokeWidth="2.400"><path d="M13 6H2M7 1 2 6l5 5" /></svg>
        </ToolButton>
        <ToolButton aria-label="前进">
          <svg width="14" height="12" viewBox="0 0 14 12" fill="none" stroke="#c4c4c4" strokeWidth="2.400"><path d="M1 6h11M7 1l5 5-5 5" /></svg>
        </ToolButton>
        <ToolButton aria-label="刷新">
          <svg width="14" height="14" viewBox="0 0 14 14"><path d="M11.500 4A5.200 5.200 0 1 0 12 9" fill="none" stroke="#555" strokeWidth="2.200" /><path d="M13.500.5v6h-6z" fill="#555" /></svg>
        </ToolButton>
        <ToolButton aria-label="主页">
          <svg width="14" height="14" viewBox="0 0 14 14" fill="#555"><path d="M7 1 0 8l1 1 1-1v5h4V9h2v4h4V8l1 1 1-1-2-2V2h-2v2z" /></svg>
        </ToolButton>
        <AddressBox>
          <PageIcon />
          <AddressInput aria-label="地址" defaultValue="www.enjoy3c.com" />
          <svg width="16" height="16" viewBox="0 0 16 16" fill="none" stroke="#888"><path d="m8 1 2 4.800 5 .4-3.800 3.300 1.200 5L8 11.800l-4.400 2.700 1.200-5L1 6.200l5-.4z" /></svg>
        </AddressBox>
        <ToolButton aria-label="Amazon">
          <svg width="16" height="16" viewBox="0 0 16 16" fill="none"><path d="M5 3.500q3-2.500 5 0V9l1.500 1M10 5.500Q4.500 5 5 8t5 0" stroke="#222" strokeWidth="2.200" /><path d="M1 11.500q7 5 13 0M12 11h3v3" stroke="#f59a1b" strokeWidth="1.800" /></svg>
        </ToolButton>
        <ToolButton aria-label="扩展程序">
          <svg width="16" height="16" viewBox="0 0 16 16"><rect width="16" height="16" rx="1" fill="#1a62b7" /><path d="M0 0h16v3H0z" fill="#0d3f86" /><path d="M8 6q4-4 7 0v8q-2 2-6 1-3-4-1-9z" fill="#4db5ef" /><path d="M10 6q4-2 4 3-3 0-4-3z" fill="#123c6e" /><path d="M1 7q4-3 8-1L6 9z" fill="#9fdcfa" /><path d="M6 7l3-1-1 3z" fill="#f6d743" /></svg>
        </ToolButton>
        <ToolButton aria-label="菜单">
          <svg width="12" height="12" viewBox="0 0 12 12" stroke="#555" strokeWidth="2.200"><path d="M0 1.500h12M0 6h12M0 10.500h12" /></svg>
        </ToolButton>
      </Toolbar>

      <Bookmarks>
        {bookmarks.map(([label, icon]) => (
          <Bookmark href="#" key={label}>{icon || <FolderIcon />}{label}</Bookmark>
        ))}
        <Overflow aria-label="更多书签">»</Overflow>
        <Bookmark href="#"><FolderIcon />其他书签</Bookmark>
      </Bookmarks>

      <Viewport>
        <Page>
          <SiteHeader>
            <HeaderRow>
              <Brand>
                <BrandTop>
                  <BrandName>乐享</BrandName>
                  <Mosaic />
                  <BrandTagline>联想旗下专业3C服务品牌</BrandTagline>
                </BrandTop>
                <BrandBottom>
                  <Domain>ENJOY3C.COM</Domain>
                  <Slogans>
                    <Slogan $color="#f7941d">快乐</Slogan>
                    <Slogan $color="#52c167">年轻</Slogan>
                    <Slogan $color="#1c9ee0">时尚</Slogan>
                    <Slogan $color="#ff3aa0">分享</Slogan>
                  </Slogans>
                </BrandBottom>
              </Brand>
              <Contact>
                <StoreFinder href="#">查询身边<PinIcon />的</StoreFinder>
                <Hotline>
                  <svg width="31" height="40" viewBox="0 0 31 40" fill="none" stroke="#cf0a14" strokeWidth="2" aria-hidden="true">
                    <path d="M13 39C-2 32-2 12 14 4Q22-1 29 2Q31 5 27 8L21 13Q16 13 17 8C6 14 4 24 8 30L13 28Q15 30 13 39z" />
                  </svg>
                  <HotlineText><HotlineLabel>服务热线</HotlineLabel>400-100-9988</HotlineText>
                </Hotline>
              </Contact>
            </HeaderRow>
            <CallPanel>
              <CallTab />
              <CallTitle>
                <svg width="20" height="20" viewBox="0 0 20 20" aria-hidden="true">
                  <circle cx="10" cy="10" r="9.500" fill="#0d5fb6" />
                  <path d="M3 9Q4 4 10 4t7 5l-3 1-1-3H7l-1 3z" fill="#fff" />
                  <path d="M5 15.500Q5 10 8 9h4q3 1 3 6.500z" fill="#fff" />
                  <circle cx="10" cy="12.500" r="1.800" fill="#0d5fb6" />
                </svg>
                免费电话咨询
              </CallTitle>
              <CallArt width="33" height="36" viewBox="0 0 33 36" aria-hidden="true">
                <path d="M13 3Q27 0 31 16M14 8q9-1 12 8M15 12q5 0 7 4" stroke="#1d8fe6" strokeWidth="2.500" fill="none" />
                <rect x="1" y="16" width="22" height="19" rx="2" fill="#d9dde2" stroke="#888f98" />
                <path d="M8 16v-2h8v2" stroke="#eee" strokeWidth="2" fill="none" />
                <path d="M1 29h22" stroke="#9aa1aa" />
                <path d="M12 18v9M7.500 22.500h9" stroke="#e02231" strokeWidth="3" />
              </CallArt>
              <CallRow>
                <PhoneInput aria-label="电话号码" defaultValue="请输入您的电话号码" />
                <CallButton type="button">立即免费通话</CallButton>
              </CallRow>
            </CallPanel>
          </SiteHeader>
          <Rule><RuleAccent /></Rule>

          <Main>
            <BackdropArt />
            <Columns>
              <Column $left={0} $right={12} $line>
                <Heading><RepairIcon />快修服务</Heading>
                <Pair>
                  <ServiceCard name="手机快修" color="#ff4673" height={169} art={PhoneArt} noteColor="#f5476f" bullet="#ff9ab3" notes={["屏幕维修", "主板维修", "软件升级（刷机）"]} />
                  <ServiceCard name="电脑快修" color="#ffb27f" height={169} art={LaptopArt} noteColor="#eda577" bullet="#fdd5b9" notes={["硬件维修", "系统重装", "数据恢复"]} />
                </Pair>
                <Divider $top={10} $bottom={12} />
                <Heading $roomy><ShieldIcon />保险服务</Heading>
                <Pair>
                  <ServiceCard name="屏碎保" color="#82cbc0" height={169} art={ScreenCoverArt} ribbon={<RibbonArt color="#f22c2d" fold="#8d1418" text="HOT" />} />
                  <ServiceCard name="维修保" color="#52c167" height={169} art={RepairCoverArt} />
                </Pair>
              </Column>

              <Column $left={12} $right={12} $line>
                <Heading><BottleIcon />热门服务</Heading>
                <ServiceCard name="清理日" color="#f53293" height={97} art={BrushArt} noteColor="#a9a9ab" bullet="#d2d2d4" notes={["为您的手机、电脑做全方位的清洁，除尘消毒，及软件性能优化，还有显卡钜惠升级哦！"]} ribbon={<RibbonArt color="#fba51c" fold="#8c2a3c" text="活动" />} />
                <Divider $top={13} $bottom={15} />
                <Heading><UmbrellaIcon />防护服务</Heading>
                <ServiceCard name="乐防水" color="#50aafa" height={97} art={WaterArt} noteColor="#62a9f3" bullet="#a5d3fc" notes={["神奇纳米镀膜技术，防止液体意外泼溅"]} after={29} />
                <ServiceCard name="乐屏保" color="#b099ec" height={97} art={HammerArt} />
              </Column>

              <Column $left={11} $right={9}>
                <Heading><FlaskIcon />乐享Lab</Heading>
                <ServiceCard name="乐键" color="#ff3aa0" height={118} art={KeyArt} noteColor="#f0489e" bullet="#fd9bcd" notes={["神奇小装备，我们的目标是让您一按就“乐”起来"]} after={19} />
                <ServiceCard name="乐检测" color="#fdcf2f" height={118} art={InspectArt} noteColor="#eda577" bullet="#f8ceb0" notes={["使用乐检测，开开心心用手机"]} after={18} />
                <ServiceCard name="乐分享" color="#ff6c64" height={118} art={ShareArt} />
              </Column>
            </Columns>
          </Main>
        </Page>
        <ScrollTrack>
          <ScrollArrow aria-label="向上滚动"><svg width="6" height="4" viewBox="0 0 6 4"><path d="M0 4 3 0l3 4z" fill="#999" /></svg></ScrollArrow>
          <ScrollThumb />
          <ScrollArrow aria-label="向下滚动"><svg width="6" height="4" viewBox="0 0 6 4"><path d="M0 0h6L3 4z" fill="#555" /></svg></ScrollArrow>
        </ScrollTrack>
      </Viewport>

      <Taskbar>
        <TaskButton $width={44} $gap={12} aria-label="开始">
          <svg width="28" height="28" viewBox="0 0 28 28" fill="#fff"><path d="M0 4 12 2.300V13.300H0zM13 2.200 28 0V13.300H13zM0 14.300H12V25.500L0 23.800zM13 14.300H28V28L13 25.700z" /></svg>
        </TaskButton>
        <TaskButton $width={42} $gap={12} aria-label="文件资源管理器">
          <svg width="34" height="34" viewBox="0 0 34 34">
            <path d="M2 3q0-2 2-2h5l2 2h20q2 0 2 2v24H2z" fill="#e3c766" />
            <path d="M5 3h6v4H5zM13 4h7v4h-7zM22 5h8v4h-8z" fill="#fff" />
            <path d="M5 3h2v2H5z" fill="#3a9b52" />
            <path d="M13 4h2v2h-2z" fill="#d93a2f" />
            <path d="M22 5h2v2h-2z" fill="#3c86d0" />
            <path d="M1 8h9l2 2h21v20H1z" fill="#f7e49a" />
            <path d="M4 33V23q0-3 3-3h20q3 0 3 3v10h-6v-6H10v6z" fill="#8fd0ee" stroke="#5aa9d0" />
          </svg>
        </TaskButton>
        <TaskButton $width={58} $gap={11} $active aria-label="Chrome">
          <svg width="31" height="31" viewBox="0 0 31 31">
            <circle cx="15.500" cy="15.500" r="15" fill="#f9cd1e" />
            <path d="M2.500 8A15 15 0 0 1 28.500 8H15.500L9 19z" fill="#dd3b30" />
            <path d="M2.500 8A15 15 0 0 0 14 30.500L21 19.500H11z" fill="#48a84b" />
            <circle cx="15.500" cy="15.500" r="7" fill="#fff" />
            <circle cx="15.500" cy="15.500" r="5.600" fill="#3c7fd0" />
          </svg>
        </TaskButton>
        <TaskButton $width={42} aria-label="Internet Explorer">
          <svg width="34" height="34" viewBox="0 0 34 34" fill="none">
            <path d="M28 25Q24 30 17.500 30A11.500 12 0 1 1 29 18H11" stroke="#4cc1f2" strokeWidth="5.500" />
            <path d="M5 31Q-2 31 7 18Q16 4 28 2Q34 1 30 9" stroke="#f3c22c" strokeWidth="2.500" />
          </svg>
        </TaskButton>
        <Tray>
          <svg width="32" height="20" viewBox="0 0 32 20" fill="none" stroke="#fff"><rect x="1" y="1" width="30" height="18" strokeWidth="2" /><path d="M4 5h24M4 9h24M4 13h24M4 16h4M11 16h12M25 16h3M4 5v8M8 5v8M12 5v8M16 5v8M20 5v8M24 5v8M28 5v8" /></svg>
          <svg width="18" height="6" viewBox="0 0 18 6"><path d="M5 5 9 0l4 5z" fill="#fff" /></svg>
          <svg width="17" height="16" viewBox="0 0 17 16" fill="none" stroke="#fff"><path d="M1 5h2l5-4v14l-5-4H1z" fill="#fff" /><path d="M10 5q2 3 0 6M12.500 3.500q3 4.500 0 9" /></svg>
          <svg width="16" height="12" viewBox="0 0 16 12" stroke="#fff" strokeWidth="2"><path d="M1 12v-2M5 12V8M9 12V5M13 12V1" /></svg>
          <span>英</span>
          <Ime>五</Ime>
          <Clock dateTime="2014-07-20T15:15">15:15<br />2014/7/20</Clock>
        </Tray>
      </Taskbar>

      <Volume aria-label="音量">
        <VolumeBar />
        50
      </Volume>
      <Watermark><Seal>值</Seal>什么值得买</Watermark>
    </Desktop>
  );
}
